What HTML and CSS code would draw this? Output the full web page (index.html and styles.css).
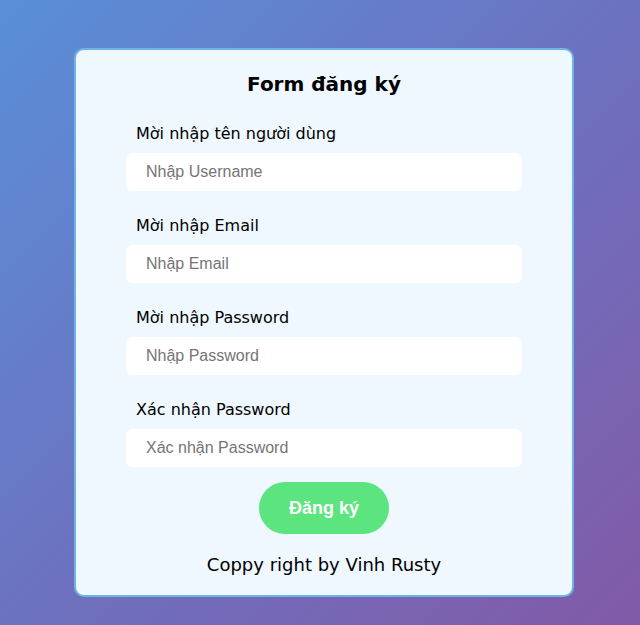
FILE: index.html
```html
<!DOCTYPE html>
<html lang="vi">
<head>
<meta charset="utf-8">
<title>Form đăng ký</title>
<link rel="stylesheet" href="styles.css">
</head>
<body>
<div class="page">
  <form class="card">
    <h1 class="title">Form đăng ký</h1>
    <div class="group">
      <label class="label">Mời nhập tên người dùng</label>
      <input class="input" type="text" placeholder="Nhập Username">
    </div>
    <div class="group">
      <label class="label">Mời nhập Email</label>
      <input class="input" type="text" placeholder="Nhập Email">
    </div>
    <div class="group">
      <label class="label">Mời nhập Password</label>
      <input class="input" type="password" placeholder="Nhập Password">
    </div>
    <div class="group">
      <label class="label">Xác nhận Password</label>
      <input class="input" type="password" placeholder="Xác nhận Password">
    </div>
    <button class="btn" type="button">Đăng ký</button>
    <p class="footer">Coppy right by Vinh Rusty</p>
  </form>
</div>
</body>
</html>
```
FILE: styles.css
```css
html, body {
  margin: 0;
  padding: 0;
  height: 100%;
}
body {
  background: linear-gradient(135deg, #5a8fd8 0%, #6c72c0 50%, #825aa8 100%);
  font-family: "DejaVu Sans", Verdana, sans-serif;
}
.page {
  box-sizing: border-box;
  height: 625px;
  padding: 48px 0 0 8px;
  display: flex;
  justify-content: center;
  align-items: flex-start;
}
.card {
  box-sizing: border-box;
  width: 500px;
  height: 549px;
  background: #eff7ff;
  border: 2px solid #6db5e6;
  border-radius: 10px;
  display: flex;
  flex-direction: column;
  align-items: center;
  padding: 21px 0 0;
}
.title {
  margin: 0;
  font-size: 20px;
  font-weight: bold;
  line-height: 26px;
  color: #000;
}
.group {
  width: 396px;
  display: flex;
  flex-direction: column;
  margin-top: 27px;
}
.group + .group {
  margin-top: 25px;
}
.label {
  font-size: 16px;
  line-height: 20px;
  padding-left: 10px;
  color: #000;
  margin-bottom: 9px;
}
.input {
  box-sizing: border-box;
  height: 38px;
  border: none;
  border-radius: 6px;
  background: #fff;
  padding: 0 20px;
  font-family: "Liberation Sans", Arial, sans-serif;
  font-size: 16px;
  color: #333;
  outline: none;
}
.input::placeholder {
  color: #757575;
}
.btn {
  margin-top: 15px;
  width: 130px;
  height: 52px;
  border: none;
  border-radius: 26px;
  background: #5ce47f;
  color: #fff;
  font-family: "Liberation Sans", Arial, sans-serif;
  font-weight: bold;
  font-size: 18px;
}
.footer {
  margin: 20px 0 0;
  font-size: 18px;
  line-height: 22px;
  color: #000;
}
```
